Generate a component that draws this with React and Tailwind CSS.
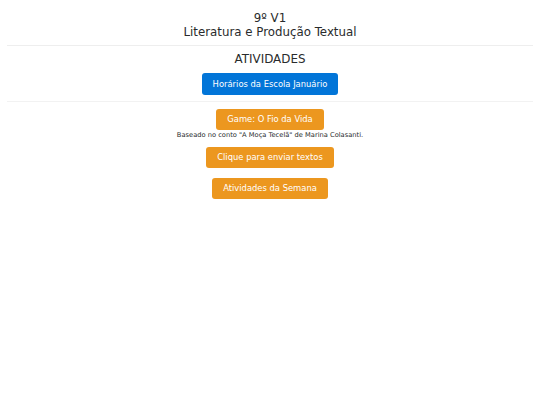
export default function App() {
  const font = { fontFamily: '"DejaVu Sans", "Noto Sans", sans-serif' };
  return (
    <div className="w-[540px] h-[405px] bg-white text-[#292b2c]" style={font}>
      <div className="px-[7px]">
        <div className="pt-[11px] pb-[6px] text-center text-[11.8px] leading-[14px]">
          <div>9º V1</div>
          <div>Literatura e Produção Textual</div>
        </div>
        <div className="h-px bg-[#eeeeee]" />
        <div className="flex flex-col items-center">
          <div className="mt-[6px] text-[11.9px] leading-[14px]">ATIVIDADES</div>
          <div className="mt-[7px] h-[22px] px-[11px] flex items-center rounded-[3px] bg-[#0275d8] text-white text-[8.4px]">
            Horários da Escola Januário
          </div>
        </div>
        <div className="mt-[6px] h-px bg-[#f2f2f2]" />
        <div className="flex flex-col items-center">
          <div className="mt-[7px] h-[21px] px-[11px] flex items-center rounded-[3px] bg-[#ec971f] text-white text-[8.4px]">
            Game: O Fio da Vida
          </div>
          <div className="mt-[1px] text-[6.7px] leading-[9px] text-[#292b2c]">
            Baseado no conto "A Moça Tecelã" de Marina Colasanti.
          </div>
          <div className="mt-[7px] h-[21px] px-[11px] flex items-center rounded-[3px] bg-[#ec971f] text-white text-[8.4px]">
            Clique para enviar textos
          </div>
          <div className="mt-[10px] h-[21px] px-[11px] flex items-center rounded-[3px] bg-[#ec971f] text-white text-[8.4px]">
            Atividades da Semana
          </div>
        </div>
      </div>
    </div>
  );
}
